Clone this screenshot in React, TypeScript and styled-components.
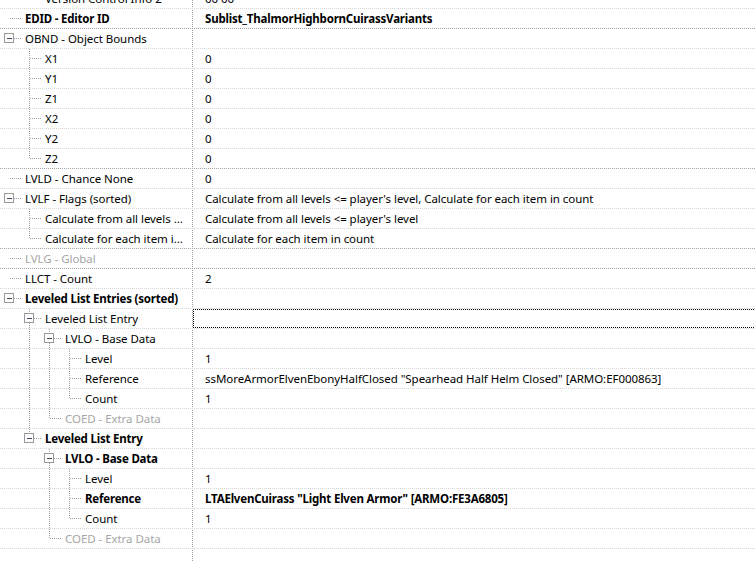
import React from 'react';
import styled, { createGlobalStyle } from 'styled-components';

type Node = {
  name: string;
  value?: string;
  bold?: boolean;
  boldValue?: boolean;
  disabled?: boolean;
  focused?: boolean;
  darkLine?: boolean;
  children?: Node[];
};

type Flat = {
  node: Node;
  level: number;
  guides: boolean[];
  last: boolean;
};

const leaf = (name: string, value: string, extra: Partial<Node> = {}): Node => ({
  name,
  value,
  ...extra,
});

// the record header sits above the visible area, only its last child peeks in
const record: Node[] = [
  { name: 'Record Header', children: [leaf('Version Control Info 2', '00 00')] },
  leaf('EDID - Editor ID', 'Sublist_ThalmorHighbornCuirassVariants', {
    bold: true,
    boldValue: true,
    darkLine: true,
  }),
  {
    name: 'OBND - Object Bounds',
    children: [
      leaf('X1', '0'),
      leaf('Y1', '0'),
      leaf('Z1', '0'),
      leaf('X2', '0'),
      leaf('Y2', '0'),
      leaf('Z2', '0', { darkLine: true }),
    ],
  },
  leaf('LVLD - Chance None', '0'),
  {
    name: 'LVLF - Flags (sorted)',
    value: "Calculate from all levels <= player's level, Calculate for each item in count",
    children: [
      leaf('Calculate from all levels ...', "Calculate from all levels <= player's level"),
      leaf('Calculate for each item i...', 'Calculate for each item in count', { darkLine: true }),
    ],
  },
  leaf('LVLG - Global', '', { disabled: true, darkLine: true }),
  leaf('LLCT - Count', '2'),
  {
    name: 'Leveled List Entries (sorted)',
    bold: true,
    children: [
      {
        name: 'Leveled List Entry',
        focused: true,
        children: [
          {
            name: 'LVLO - Base Data',
            children: [
              leaf('Level', '1'),
              leaf(
                'Reference',
                'ssMoreArmorElvenEbonyHalfClosed "Spearhead Half Helm Closed" [ARMO:EF000863]'
              ),
              leaf('Count', '1'),
            ],
          },
          leaf('COED - Extra Data', '', { disabled: true }),
        ],
      },
      {
        name: 'Leveled List Entry',
        bold: true,
        children: [
          {
            name: 'LVLO - Base Data',
            bold: true,
            children: [
              leaf('Level', '1'),
              leaf('Reference', 'LTAElvenCuirass "Light Elven Armor" [ARMO:FE3A6805]', {
                bold: true,
                boldValue: true,
              }),
              leaf('Count', '1'),
            ],
          },
          leaf('COED - Extra Data', '', { disabled: true }),
        ],
      },
    ],
  },
];

const flatten = (nodes: Node[], level = 0, guides: boolean[] = []): Flat[] =>
  nodes.flatMap((node, i) => {
    const last = i === nodes.length - 1;
    const row: Flat = { node, level, guides, last };
    const kids = node.children
      ? flatten(node.children, level + 1, level === 0 ? [false] : [...guides, !last])
      : [];
    return [row, ...kids];
  });

const GlobalStyle = createGlobalStyle`
  html, body {
    margin: 0;
    background: #fff;
  }
  body {
    font-family: "Noto Sans", "Open Sans", sans-serif;
    font-size: 11.5px;
    letter-spacing: -0.05px;
    color: #000;
  }
`;

const Tree = styled.div`
  width: 755px;
  height: 562px;
  overflow: hidden;
  background: repeating-linear-gradient(to bottom, #a0a0a0 0 1px, transparent 1px 2px) 192px 0 /
    1px 100% no-repeat;
`;

const Rows = styled.div`
  width: 760px;
  margin-top: -31px;
`;

const Row = styled.div<{ $dark?: boolean }>`
  display: flex;
  height: 20px;
  box-sizing: border-box;
  background-image: repeating-linear-gradient(
    to right,
    ${(p) => (p.$dark ? '#a3a3a3' : '#d6d6d6')} 0 1px,
    transparent 1px 2px
  );
  background-size: 100% 1px;
  background-position: 0 100%;
  background-repeat: no-repeat;
`;

const NameCell = styled.div`
  display: flex;
  align-items: flex-start;
  width: 192px;
  flex: none;
  overflow: hidden;
  white-space: nowrap;
`;

const Label = styled.span<{ $bold?: boolean; $disabled?: boolean }>`
  padding-left: 3px;
  line-height: 19px;
  font-weight: ${(p) => (p.$bold ? 700 : 400)};
  letter-spacing: ${(p) => (p.$bold ? '-0.2px' : '-0.05px')};
  color: ${(p) => (p.$disabled ? '#a6a6a6' : '#000')};
`;

const ValueCell = styled.div<{ $focused?: boolean }>`
  flex: 1;
  margin-left: 1px;
  height: 19px;
  padding-left: 12px;
  line-height: 19px;
  white-space: nowrap;
  overflow: hidden;
  outline: ${(p) => (p.$focused ? '1px dotted #000' : 'none')};
  outline-offset: -1px;
`;

const ValueText = styled.span<{ $bold?: boolean }>`
  font-weight: ${(p) => (p.$bold ? 700 : 400)};
  letter-spacing: ${(p) => (p.$bold ? '-0.2px' : '-0.05px')};
`;

const Svg = styled.svg`
  display: block;
  flex: none;
`;

const LINE = '#a0a0a0';

const Guide = ({ pass }: { pass: boolean }) => (
  <Svg width={20} height={20} shapeRendering="crispEdges">
    {pass && (
      <line x1={9.5} y1={0} x2={9.5} y2={20} stroke={LINE} strokeDasharray="1 1" />
    )}
  </Svg>
);

const Joint = ({ level, last, box }: { level: number; last: boolean; box: boolean }) => (
  <Svg width={22} height={20} shapeRendering="crispEdges">
    {level > 0 && (
      <line
        x1={9.5}
        y1={0}
        x2={9.5}
        y2={last ? 10 : 20}
        stroke={LINE}
        strokeDasharray="1 1"
      />
    )}
    <line x1={10} y1={9.5} x2={22} y2={9.5} stroke={LINE} strokeDasharray="1 1" />
    {box && (
      <g>
        <rect x={4.5} y={4.5} width={9} height={9} fill="#fcfcfc" stroke="#9a9a9a" />
        <line x1={7} y1={9.5} x2={12} y2={9.5} stroke="#3e4a5c" />
      </g>
    )}
  </Svg>
);

const App = () => {
  const rows = flatten(record);
  return (
    <>
      <GlobalStyle />
      <Tree>
        <Rows>
          {rows.map(({ node, level, guides, last }, i) => (
            <Row key={i} $dark={node.darkLine}>
              <NameCell>
                {guides.map((g, j) => (
                  <Guide key={j} pass={g} />
                ))}
                <Joint level={level} last={last} box={!!node.children} />
                <Label $bold={node.bold} $disabled={node.disabled}>
                  {node.name}
                </Label>
              </NameCell>
              <ValueCell $focused={node.focused}>
                <ValueText $bold={node.boldValue}>{node.value}</ValueText>
              </ValueCell>
            </Row>
          ))}
        </Rows>
      </Tree>
    </>
  );
};

export default App;
